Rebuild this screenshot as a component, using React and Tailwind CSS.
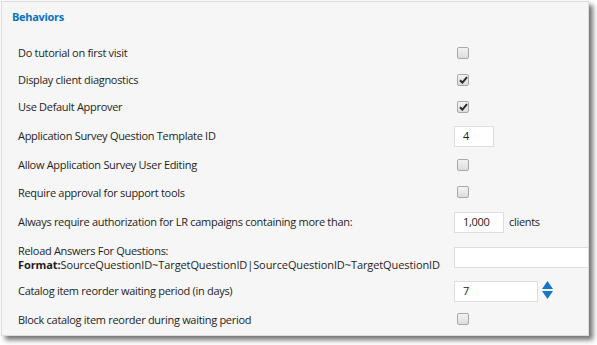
import React from "react";

const Check = ({ checked }) => (
  <div className="w-[12px] h-[12px] rounded-[2px] border border-[#a9a9a9] bg-gradient-to-b from-[#f4f4f4] to-[#dcdcdc] flex items-center justify-center">
    {checked && (
      <svg width="9" height="8" viewBox="0 0 9 8">
        <path d="M1 4.2 L3.4 6.6 L8 1.2" fill="none" stroke="#2b2b2b" strokeWidth="2" />
      </svg>
    )}
  </div>
);

const Field = ({ value, w }) => (
  <div className={`${w} h-[21px] bg-white border border-[#dedede] flex items-center pl-[8px] text-[#222]`}>
    {value}
  </div>
);

const Row = ({ h, label, children }) => (
  <div className={`${h} flex items-center`}>
    <div className="w-[452px] shrink-0 pl-[16px] text-[#1e1e1e]">{label}</div>
    <div className="flex items-center">{children}</div>
  </div>
);

const App = () => {
  return (
    <div className="w-[597px] h-[345px] bg-white overflow-hidden" style={{ fontFamily: '"Open Sans", "Noto Sans", sans-serif' }}>
      <div className="ml-[1px] mt-[1px] w-[588px] h-[335px] bg-[#f6f6f6] border border-[#dcdcdc] shadow-[4px_4px_5px_rgba(0,0,0,0.55)] text-[11px] tracking-[-0.3px] overflow-hidden">
        <div className="h-[38px] pl-[10px] pt-[7px] font-bold text-[#0a72c4]">Behaviors</div>
        <Row h="h-[27px]" label="Do tutorial on first visit"><div className="pl-[3px] -mt-[2px]"><Check /></div></Row>
        <Row h="h-[27px]" label="Display client diagnostics"><div className="pl-[3px] -mt-[2px]"><Check checked /></div></Row>
        <Row h="h-[27px]" label="Use Default Approver"><div className="pl-[3px] -mt-[2px]"><Check checked /></div></Row>
        <Row h="h-[31px]" label="Application Survey Question Template ID"><Field value="4" w="w-[40px]" /></Row>
        <Row h="h-[27px]" label="Allow Application Survey User Editing"><div className="pl-[3px] -mt-[2px]"><Check /></div></Row>
        <Row h="h-[28px]" label="Require approval for support tools"><div className="pl-[3px] -mt-[2px]"><Check /></div></Row>
        <Row h="h-[31px]" label="Always require authorization for LR campaigns containing more than:">
          <Field value="1,000" w="w-[50px]" />
          <span className="ml-[5px] text-[#1e1e1e]">clients</span>
        </Row>
        <div className="h-[39px] flex items-center">
          <div className="w-[452px] shrink-0 pl-[16px] text-[#1e1e1e] leading-[14px]">
            <div>Reload Answers For Questions:</div>
            <div className="whitespace-nowrap tracking-[-0.1px]"><span className="font-bold">Format:</span>SourceQuestionID~TargetQuestionID|SourceQuestionID~TargetQuestionID</div>
          </div>
          <div className="w-[160px] shrink-0"><Field value="" w="w-[160px]" /></div>
        </div>
        <Row h="h-[28px]" label="Catalog item reorder waiting period (in days)">
          <Field value="7" w="w-[84px]" />
          <svg className="ml-[4px] -mt-[2px]" width="11" height="19" viewBox="0 0 11 19">
            <path d="M5.5 0 L11 8 L0 8 Z" fill="#1677c9" />
            <path d="M0 10 L11 10 L5.5 18 Z" fill="#1677c9" />
          </svg>
        </Row>
        <Row h="h-[30px]" label="Block catalog item reorder during waiting period"><div className="pl-[3px] -mt-[2px]"><Check /></div></Row>
      </div>
    </div>
  );
};

export default App;
